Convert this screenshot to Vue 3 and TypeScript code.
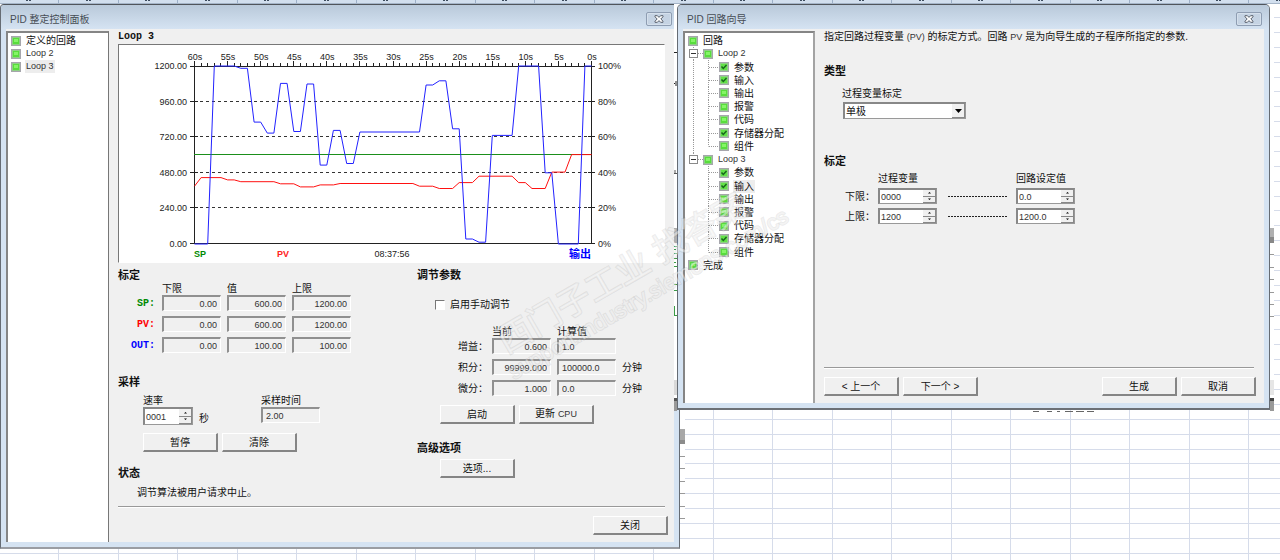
<script setup lang="ts">
import { reactive, ref } from 'vue'

type Point = [number, number]
interface TreeRow { text: string; level: 0 | 1 | 2; done?: boolean; last?: boolean; trunk?: boolean; selected?: boolean; latin?: boolean }

/* spreadsheet behind the windows */
const columnX = (i: number) => Math.round(58 + i * 59.5)
const rowLines = Array.from({ length: 80 }, (_, i) => Math.round(17 + i * 14.88))

/* tuning panel */
const loops = [
  { text: '定义的回路', latin: false, selected: false },
  { text: 'Loop 2', latin: true, selected: false },
  { text: 'Loop 3', latin: true, selected: true },
]
const scaling = [
  { name: 'SP', tone: 'sp', values: ['0.00', '600.00', '1200.00'] },
  { name: 'PV', tone: 'pv', values: ['0.00', '600.00', '1200.00'] },
  { name: 'OUT', tone: 'out', values: ['0.00', '100.00', '100.00'] },
]
const tuning = [
  { name: '增益', current: '0.600', computed: '1.0', unit: '' },
  { name: '积分', current: '99999.000', computed: '100000.0', unit: '分钟' },
  { name: '微分', current: '1.000', computed: '0.0', unit: '分钟' },
]
const rate = ref('0001')
const manual = ref(false)

/* chart: x is seconds since the left edge, y is percent of range */
const plot = { left: 194, right: 591, top: 66, bottom: 244 }
const px = (k: number) => plot.left + ((plot.right - plot.left) * k) / 60
const py = (p: number) => plot.bottom - ((plot.bottom - plot.top) * p) / 100
const toLine = (pts: Point[]) => pts.map(([k, p]) => `${(px(k) + 0.5).toFixed(1)},${py(p).toFixed(1)}`).join(' ')
const output: Point[] = [
  [0, 0], [2, 0], [3, 100], [6, 100], [7, 98.7], [8, 98.7], [9, 68.5], [10, 68.5], [11, 62.3], [12, 62.3],
  [13, 90.2], [14, 90.2], [15, 63.2], [16, 63.2], [17, 89.9], [18, 89.9], [19, 44.3], [20, 44.3], [21, 63.8],
  [22, 63.8], [23, 45.2], [24, 45.2], [25, 62.9], [34, 62.9], [35, 89.3], [36, 89.3], [37, 91.7], [38, 91.7],
  [39, 64.7], [40, 64.7], [41, 2.8], [42, 2.8], [43, 1], [44, 1], [45, 61], [48, 61], [49, 100], [52, 100],
  [53, 40], [54, 40], [55, 0], [58, 0], [59, 100], [60, 100],
]
const process: Point[] = [
  [0, 32.5], [1, 37.3], [4, 37.3], [5, 36], [6, 36], [7, 35], [12, 35], [13, 33.8], [15, 33.8], [16, 32.1],
  [18, 32.1], [19, 33.2], [21, 33.2], [22, 34], [33, 34], [34, 32.5], [36, 32.5], [37, 31.2], [39, 31.2],
  [40, 34.5], [42, 34.5], [43, 38.1], [48, 38.1], [49, 34.5], [50, 34.5], [51, 31.2], [53, 31.2], [54, 40.4],
  [56, 40.4], [57, 50.2], [60, 50.2],
]
const levels = [100, 80, 60, 40, 20, 0]
const seconds = Array.from({ length: 61 }, (_, i) => i)
const secondLabels = seconds.filter((s) => s % 5 === 0)

/* wizard */
const leaves = (selected?: string): TreeRow[] =>
  ['参数', '输入', '输出', '报警', '代码', '存储器分配', '组件'].map((text) => ({
    text,
    level: 2,
    done: ['参数', '输入', '存储器分配'].includes(text),
    last: text === '组件',
    selected: text === selected,
  }))
const tree: TreeRow[] = [
  { text: '回路', level: 0 },
  { text: 'Loop 2', level: 1, latin: true },
  ...leaves().map((r) => ({ ...r, trunk: true })),
  { text: 'Loop 3', level: 1, latin: true },
  ...leaves('输入'),
  { text: '完成', level: 0 },
]
const limits = reactive([
  { name: '下限', pv: '0000', sp: '0.0' },
  { name: '上限', pv: '1200', sp: '1200.0' },
])
const polarity = ref('单极')

function step(value: string, by: number): string {
  const decimals = (value.split('.')[1] ?? '').length
  const next = Math.max(0, Number(value) + by)
  return decimals ? next.toFixed(decimals) : String(next).padStart(4, '0')
}
</script>

<template>
  <div class="desktop">
    <svg class="sheet" width="100%" height="100%" aria-hidden="true">
      <line v-for="y in rowLines" :key="'r' + y" x1="0" x2="100%" :y1="y + 0.5" :y2="y + 0.5" />
      <line v-for="i in 40" :key="'c' + i" :x1="columnX(i - 1) + 0.5" :x2="columnX(i - 1) + 0.5" y1="0" y2="100%" />
      <g class="beneath">
        <rect x="680" y="411" width="5" height="110" fill="#fff" />
        <rect x="680" y="429" width="5" height="15" fill="#a8a8a8" />
        <rect x="680" y="440" width="5" height="4" fill="#8c8c8c" />
        <path d="M680 456.500h5M680 468.500h5M680 481.500h5M680 493.500h5M680 506.500h5M680 518.500h5" stroke="#999" />
        <path d="M1033 411.500h6M1047 411.500h5M1057 411.500h3M1065 411.500h8M1076 411.500h8M1087 411.500h7" stroke="#666" />
      </g>
    </svg>
    <svg class="columns" width="100%" height="4" aria-hidden="true">
      <template v-for="i in 40" :key="i">
        <path :d="`M${columnX(i - 1)}.5 0v3`" stroke="#9db0c8" />
        <path :d="`M${columnX(i - 1) - 32} .5h2m1 0h2`" stroke="#3d4c5e" />
      </template>
    </svg>

    <main class="windows">
      <section class="window" aria-labelledby="t1">
        <header class="titlebar">
          <h1 id="t1"><span class="latin">PID</span> 整定控制面板</h1>
          <button class="close" type="button" aria-label="关闭窗口">
            <svg viewBox="0 0 10 8" width="10" height="8"><path d="M1 .7h2.400L5 2.400 6.600.7H9v1.100L6.800 4 9 6.200v1.100H6.600L5 5.600 3.400 7.300H1V6.200L3.200 4 1 1.800z" /></svg>
          </button>
        </header>
        <div class="client">
          <ul class="listbox loops">
            <li v-for="l in loops" :key="l.text">
              <svg class="led" viewBox="0 0 10 10"><use href="#led" /></svg>
              <span class="name" :class="{ latin: l.latin, selected: l.selected }">{{ l.text }}</span>
            </li>
          </ul>
          <div class="pane">
            <h2 class="mono">Loop 3</h2>
            <div class="chart">
              <svg viewBox="119 45 545 217" role="img" aria-label="Loop 3">
                <g class="grid">
                  <line v-for="p in [80, 60, 40, 20]" :key="p" :x1="plot.left" :x2="plot.right" :y1="Math.round(py(p)) - 0.5" :y2="Math.round(py(p)) - 0.5" />
                </g>
                <g class="axis">
                  <path :d="`M${plot.left + 0.5} 61V244M${plot.right + 0.5} 61V244M190 66.500H595M190 243.500H595`" />
                  <path v-for="s in seconds" :key="s" :d="`M${Math.round(px(s)) + 0.5} ${s % 5 ? 63 : 61}V66`" />
                  <path v-for="p in [80, 60, 40, 20]" :key="'l' + p" :d="`M190 ${Math.round(py(p)) - 0.5}h8M588 ${Math.round(py(p)) - 0.5}h7`" />
                </g>
                <line class="line-sp" :x1="plot.left" :x2="plot.right" y1="154.500" y2="154.500" />
                <polyline class="line-pv" :points="toLine(process)" />
                <polyline class="line-out" :points="toLine(output)" />
                <g class="ticks">
                  <text v-for="s in secondLabels" :key="s" :x="px(s) + 1" y="60" text-anchor="middle">{{ 60 - s }}s</text>
                  <text v-for="p in levels" :key="'v' + p" x="187" :y="py(p) + 3" text-anchor="end">{{ (p * 12).toFixed(2) }}</text>
                  <text v-for="p in levels" :key="'p' + p" x="598" :y="py(p) + 3">{{ p }}%</text>
                  <text x="392" y="257" text-anchor="middle">08:37:56</text>
                </g>
                <g class="legend">
                  <text x="194" y="257" fill="#008a00">SP</text>
                  <text x="277" y="257" fill="#f22">PV</text>
                  <text class="cjk" x="569" y="258" fill="#00f">输出</text>
                </g>
              </svg>
            </div>

            <div class="halves">
              <div class="half">
                <h3>标定</h3>
                <table class="scaling">
                  <thead>
                    <tr><td></td><th scope="col">下限</th><th scope="col">值</th><th scope="col">上限</th></tr>
                  </thead>
                  <tbody>
                    <tr v-for="r in scaling" :key="r.name">
                      <th scope="row" class="mono" :class="r.tone">{{ r.name }}:</th>
                      <td v-for="(v, i) in r.values" :key="i">
                        <input class="field end" readonly :value="v" :aria-label="r.name + ' ' + ['下限', '值', '上限'][i]" />
                      </td>
                    </tr>
                  </tbody>
                </table>

                <h3 class="sampling-title">采样</h3>
                <div class="sampling">
                  <div class="rate">
                    <label for="rate">速率</label>
                    <div class="with-unit">
                      <span class="spin tall">
                        <input id="rate" v-model="rate" />
                        <span class="arrows">
                          <button type="button" aria-label="速率 +" @click="rate = step(rate, 1)"><svg viewBox="0 0 5 3"><path d="M1 2.500h3L2.500 1z" /></svg></button>
                          <button type="button" aria-label="速率 -" @click="rate = step(rate, -1)"><svg viewBox="0 0 5 3"><path d="M1 .5h3L2.500 2z" /></svg></button>
                        </span>
                      </span>
                      <span class="unit">秒</span>
                    </div>
                  </div>
                  <div class="time">
                    <label for="stime">采样时间</label>
                    <input id="stime" class="field" readonly value="2.00" />
                  </div>
                </div>
                <div class="buttons indent">
                  <button class="btn" type="button">暂停</button>
                  <button class="btn" type="button">清除</button>
                </div>
                <h3 class="status-title">状态</h3>
                <p class="status">调节算法被用户请求中止。</p>
              </div>

              <div class="half">
                <h3>调节参数</h3>
                <label class="check"><input v-model="manual" type="checkbox" />启用手动调节</label>
                <table class="tuning">
                  <thead>
                    <tr><td></td><th scope="col">当前</th><th scope="col">计算值</th><td></td></tr>
                  </thead>
                  <tbody>
                    <tr v-for="r in tuning" :key="r.name">
                      <th scope="row">{{ r.name }}：</th>
                      <td><input class="field end" readonly :value="r.current" :aria-label="r.name + ' 当前'" /></td>
                      <td><input class="field" readonly :value="r.computed" :aria-label="r.name + ' 计算值'" /></td>
                      <td>{{ r.unit }}</td>
                    </tr>
                  </tbody>
                </table>
                <div class="buttons tuning-buttons">
                  <button class="btn" type="button">启动</button>
                  <button class="btn" type="button">更新 <span class="latin">CPU</span></button>
                </div>
                <h3 class="advanced-title">高级选项</h3>
                <div class="buttons advanced">
                  <button class="btn" type="button">选项...</button>
                </div>
              </div>
            </div>
            <hr />
            <div class="buttons footer"><button class="btn" type="button">关闭</button></div>
          </div>
        </div>
      </section>

      <div class="wizard">
        <div class="backdrop" aria-hidden="true">
          <svg class="edge-left" width="3" height="407">
            <path d="M0 48.500h3M0 79.500h1M2 77v5" stroke="#222" />
            <path d="M1 166v4M0 169.500h3" stroke="#555" />
            <rect y="224" width="3" height="15" fill="#b0b0b0" />
            <path d="M0 242.500h3M0 245.500h2M0 249.500h3M0 254.500h3M0 258.500h2M0 262.500h3M0 280.500h3M0 286.500h3M.5 302v9M0 311.500h3" stroke="#3a9c46" />
            <rect y="376" width="3" height="15" fill="#d8d8d8" />
            <rect y="394" width="3" height="3" fill="#555" />
            <rect y="397" width="3" height="10" fill="#999" />
          </svg>
          <svg class="edge-right" width="4" height="407">
            <rect y="224" width="4" height="15" fill="#b0b0b0" />
            <rect y="233" width="4" height="6" fill="#888" />
            <path d="M0 250.500h4M0 263.500h4M0 275.500h4M0 288.500h4M0 300.500h4M0 312.500h4" stroke="#999" />
            <rect y="376" width="4" height="15" fill="#e6e6e6" />
            <rect y="394" width="4" height="3" fill="#444" />
            <rect y="397" width="4" height="10" fill="#999" />
          </svg>
        </div>
        <section class="window front" aria-labelledby="t2">
          <header class="titlebar">
            <h1 id="t2"><span class="latin">PID</span> 回路向导</h1>
            <button class="close" type="button" aria-label="关闭窗口">
              <svg viewBox="0 0 10 8" width="10" height="8"><path d="M1 .7h2.400L5 2.400 6.600.7H9v1.100L6.800 4 9 6.200v1.100H6.600L5 5.600 3.400 7.300H1V6.200L3.200 4 1 1.800z" /></svg>
            </button>
          </header>
          <div class="client">
            <ul class="listbox tree">
              <li v-for="(r, i) in tree" :key="i">
                <template v-if="r.level === 1">
                  <span class="node" :class="{ upper: i < 5, lower: i > 5 }">
                    <button class="expander" type="button" :aria-label="'折叠 ' + r.text"></button>
                  </span>
                  <span class="dash short"></span>
                </template>
                <template v-if="r.level === 2">
                  <span class="guide" :class="{ trunk: r.trunk }"></span>
                  <span class="guide trunk" :class="{ half: r.last }"></span>
                  <span class="dash"></span>
                </template>
                <svg class="led" viewBox="0 0 10 10"><use :href="r.done ? '#led-done' : '#led'" /></svg>
                <span class="name" :class="{ latin: r.latin, selected: r.selected }">{{ r.text }}</span>
              </li>
            </ul>
            <form class="pane wizard-pane" @submit.prevent>
              <p class="intro">指定回路过程变量 <span class="latin">(PV)</span> 的标定方式。回路 <span class="latin">PV</span> 是为向导生成的子程序所指定的参数.</p>
              <h3 class="type-title">类型</h3>
              <div class="type">
                <label for="polarity">过程变量标定</label>
                <div class="select">
                  <select id="polarity" v-model="polarity"><option>单极</option><option>双极</option></select>
                  <span class="drop"><svg viewBox="0 0 7 4" width="7" height="4"><path d="M0 0h7L3.500 4z" /></svg></span>
                </div>
              </div>
              <h3 class="limits-title">标定</h3>
              <div class="limits">
                <span></span><span class="head">过程变量</span><span></span><span class="head">回路设定值</span>
                <template v-for="(r, i) in limits" :key="r.name">
                  <label :for="'pv' + i">{{ r.name }}：</label>
                  <span class="spin">
                    <input :id="'pv' + i" v-model="r.pv" />
                    <span class="arrows">
                      <button type="button" :aria-label="r.name + ' 过程变量 +'" @click="r.pv = step(r.pv, 1)"><svg viewBox="0 0 5 3"><path d="M1 2.500h3L2.500 1z" /></svg></button>
                      <button type="button" :aria-label="r.name + ' 过程变量 -'" @click="r.pv = step(r.pv, -1)"><svg viewBox="0 0 5 3"><path d="M1 .5h3L2.500 2z" /></svg></button>
                    </span>
                  </span>
                  <span class="link"></span>
                  <span class="spin">
                    <input v-model="r.sp" :aria-label="r.name + ' 回路设定值'" />
                    <span class="arrows">
                      <button type="button" :aria-label="r.name + ' 回路设定值 +'" @click="r.sp = step(r.sp, 1)"><svg viewBox="0 0 5 3"><path d="M1 2.500h3L2.500 1z" /></svg></button>
                      <button type="button" :aria-label="r.name + ' 回路设定值 -'" @click="r.sp = step(r.sp, -1)"><svg viewBox="0 0 5 3"><path d="M1 .5h3L2.500 2z" /></svg></button>
                    </span>
                  </span>
                </template>
              </div>
              <hr class="wizard-rule" />
              <div class="buttons">
                <button class="btn" type="button">&lt; 上一个</button>
                <button class="btn" type="button">下一个 &gt;</button>
                <button class="btn push" type="button">生成</button>
                <button class="btn" type="button">取消</button>
              </div>
            </form>
          </div>
        </section>
      </div>
    </main>

    <svg class="watermark" width="340" height="220" viewBox="480 180 340 220" aria-hidden="true">
      <defs>
        <g id="led">
          <rect width="10" height="10" fill="#a6a6ac" />
          <rect x="1" y="1" width="8" height="8" fill="#8fcf86" />
          <rect x="2" y="2" width="6" height="6" fill="#58dd3c" />
          <path d="M3 3h4v3H3z" fill="#84f566" />
        </g>
        <g id="led-done">
          <rect width="10" height="10" fill="#a6a6ac" />
          <rect x="1" y="1" width="8" height="8" fill="#8fcf86" />
          <rect x="2" y="2" width="6" height="6" fill="#62e246" />
          <path d="M2.500 4.500 4.300 6.500 7.500 3" fill="none" stroke="#17661c" stroke-width="1.500" />
        </g>
      </defs>
      <g class="mark">
        <text class="mark-cjk" transform="translate(506 354) rotate(-30)">西门子工业 找答案</text>
        <text class="mark-latin" transform="translate(514 380) rotate(-30)">support.industry.siemens.com/cs</text>
      </g>
    </svg>
  </div>
</template>

<style>
body {
  margin: 0;
  background: #fff;
}
</style>

<style scoped>
.desktop {
  position: relative;
  min-height: 100vh;
  overflow: hidden;
  font: 10px/13px "Liberation Sans", "Noto Sans CJK SC", sans-serif;
  color: #111;
}
.desktop * { box-sizing: border-box; }
button, input, select { font: inherit; color: inherit; margin: 0; padding: 0; border-radius: 0; }
h1, h2, h3, p, ul { margin: 0; padding: 0; }
ul { list-style: none; }
.latin { font-size: 9px; color: #333; }
.mono { font-family: "Liberation Mono", monospace; }

.sheet { position: absolute; inset: 0; }
.sheet line { stroke: #d6dcea; }
.columns {
  position: relative;
  display: block;
  background: #d2dfee;
  border-bottom: 1px solid #a5b5c8;
}

.windows {
  position: relative;
  display: grid;
  grid-template-columns: 680fr 590fr;
  align-items: start;
  padding-right: 10px;
}
.window {
  background: #d5e3f2;
  border: 1px solid #666c74;
  border-bottom: 2px solid #9a9da3;
  border-top-color: #50555c;
  border-radius: 4px 4px 0 0;
}
.wizard { position: relative; margin-left: -3px; }
.front { position: relative; border-bottom: 2px solid #6c7076; border-radius: 5px 5px 0 0; }
.backdrop {
  position: absolute;
  inset: 0 -4px 0 -3px;
  display: flex;
  justify-content: space-between;
  background: #fff;
}
.titlebar {
  display: flex;
  align-items: center;
  justify-content: space-between;
  height: 24px;
  padding: 4px 7px 0 9px;
  border-radius: 4px 4px 0 0;
  background: linear-gradient(#b9c9da, #d5e3f2);
}
.titlebar h1 { font-size: 10px; font-weight: 400; color: #474d55; }
.titlebar .latin { font-size: 10px; color: #474d55; }
.close {
  display: flex;
  align-items: center;
  justify-content: center;
  width: 26px;
  height: 14px;
  border: 1px solid #8e9db2;
  border-radius: 2px;
  background: #c5d3e3;
  box-shadow: inset 0 0 0 1px #d5e0ec;
}
.close path { fill: #fff; stroke: #59616d; }
.client { display: flex; margin: 0 5px 5px; background: #f0f0f0; }
.listbox {
  flex: none;
  margin-top: 2px;
  padding: 1px 0 0 2px;
  background: #fff;
  border: 2px solid #858585;
  border-right: 1px solid #777;
  border-bottom: 0;
  display: grid;
}
.loops { width: 103px; align-content: start; grid-template-rows: repeat(3, 13px); }
.listbox li { display: flex; align-items: center; min-height: 0; white-space: nowrap; line-height: 13px; }
.led { flex: none; width: 10px; height: 10px; margin-left: 1px; }
.name { margin-left: 4px; padding: 0 1px; height: 13px; }
.selected { background: #ededed; }
.tree { width: 132px; border-right: 2px solid #a3a3a3; grid-template-rows: repeat(18, 1fr); padding-bottom: 131px; }
.guide { align-self: stretch; flex: none; width: 15px; }
.trunk, .node { background: repeating-linear-gradient(#999 0 1px, #fff 1px 2px) 6px 0 / 1px 100% no-repeat; }
.trunk.half, .node.lower { background-size: 1px 50%; }
.dash { flex: none; width: 10px; height: 1px; margin-left: -8px; margin-right: -1px; background: repeating-linear-gradient(90deg, #999 0 1px, #fff 1px 2px); }
.dash.short { width: 5px; margin: 0 -1px 0 0; }
.node { align-self: stretch; display: flex; align-items: center; flex: none; width: 11px; padding-left: 2px; }
.expander {
  width: 9px;
  height: 9px;
  border: 1px solid #8a8a8a;
  background: linear-gradient(#333, #333) center / 5px 1px no-repeat #fff;
}

.pane { flex: 1; min-width: 0; padding: 1px 6px 7px 9px; display: flex; flex-direction: column; }
h2 { font-size: 10px; line-height: 14px; }
h3 { font-size: 11px; line-height: 14px; font-weight: 700; }
.chart {
  margin-right: 3px;
  border: 1px solid #fff;
  border-top-color: #777;
  border-left-color: #777;
  background: #fff;
}
.chart svg { display: block; width: 100%; height: 217px; }
.grid line { stroke: #333; stroke-dasharray: 3 3; }
.axis path { stroke: #222; fill: none; }
.line-sp { stroke: #1b8f1b; }
.line-pv, .line-out { fill: none; stroke-width: 1; }
.line-pv { stroke: #f11; }
.line-out { stroke: #22f; }
.ticks text { font-size: 9px; fill: #222; }
.legend text { font-size: 9px; font-weight: 700; }
.legend .cjk { font-size: 11px; }

.halves { display: grid; grid-template-columns: 299px 1fr; padding-top: 5px; }
table { border-collapse: collapse; }
th, td { padding: 0 6px 5px 0; font-weight: 400; text-align: left; white-space: nowrap; line-height: 13px; }
thead th, thead td { padding: 0; height: 13px; }
tbody td, tbody th { height: 21px; }
.scaling tbody th { width: 44px; padding: 0 7px 5px 0; text-align: right; font-weight: 700; }
.sp { color: #008a00; }
.pv { color: #f00; }
.out { color: #00f; }
.field {
  display: block;
  width: 59px;
  height: 16px;
  padding: 0 3px;
  background: #f0f0f0;
  border: 1px solid #fff;
  border-top: 2px solid #909090;
  border-left: 2px solid #909090;
  font-size: 9px;
  line-height: 13px;
  color: #333;
}
.end { text-align: right; }
.sampling-title { margin-top: 17px; }
.sampling { display: flex; margin: 5px 0 0 25px; }
.sampling label { display: block; }
.rate { width: 118px; }
.with-unit { display: flex; }
.unit { margin: 5px 0 0 6px; }
.buttons { display: flex; gap: 4px; }
.indent { margin: 8px 0 0 25px; }
.btn {
  width: 75px;
  height: 19px;
  background: #f0f0f0;
  border: 1px solid #fff;
  border-right: 2px solid #858585;
  border-bottom: 2px solid #858585;
  line-height: 15px;
}
.status-title { margin-top: 14px; }
.status { margin: 6px 0 0 19px; line-height: 14px; }
.check { display: flex; align-items: center; margin: 16px 0 0 18px; gap: 5px; }
.check input {
  appearance: none;
  width: 10px;
  height: 10px;
  background: #fff;
  border: 1px solid #fff;
  border-top-color: #777;
  border-left-color: #777;
}
.check input:checked { background: #333; }
.tuning { margin: 14px 0 0 41px; }
.tuning tbody th { width: 34px; padding-right: 0; }
.tuning-buttons { margin: 4px 0 0 23px; }
.advanced-title { margin-top: 17px; }
.advanced { margin: 4px 0 0 23px; }
hr { margin: 6px 3px 0 0; border: 0; border-top: 1px solid #999; border-bottom: 1px solid #fff; }
.footer { justify-content: flex-end; margin-top: 8px; }

.spin {
  display: flex;
  width: 59px;
  height: 16px;
  background: #fff;
  border: 1px solid #999;
  border-top: 2px solid #888;
  border-left: 2px solid #888;
}
.spin.tall { width: 50px; height: 18px; }
.spin input { flex: 1; width: 0; min-width: 0; padding-left: 1px; border: 0; background: none; font-size: 9px; line-height: 12px; color: #333; }
.arrows { display: flex; flex-direction: column; width: 13px; }
.arrows button {
  flex: 1;
  min-height: 0;
  display: flex;
  align-items: center;
  justify-content: center;
  background: #f0f0f0;
  border: 0;
  border-right: 1px solid #888;
  border-bottom: 1px solid #888;
}
.arrows svg { width: 5px; height: 3px; }

.wizard-pane { min-height: 374px; padding-right: 8px; }
.intro { line-height: 14px; }
.type-title { margin-top: 20px; }
.type { margin: 9px 0 0 18px; }
.type label { display: block; }
.select { display: grid; width: 123px; height: 17px; margin: 2px 0 0 1px; background: #fff; border: 1px solid #999; border-top: 2px solid #888; border-left: 2px solid #888; }
.select select { grid-area: 1 / 1; appearance: none; width: 100%; border: 0; background: none; padding: 0 0 0 1px; line-height: 13px; }
.drop {
  grid-area: 1 / 1;
  justify-self: end;
  display: flex;
  align-items: center;
  justify-content: center;
  width: 13px;
  background: #f0f0f0;
  border-right: 1px solid #888;
  border-bottom: 1px solid #888;
  pointer-events: none;
}
.limits-title { margin-top: 35px; }
.limits {
  display: grid;
  grid-template-columns: 33px 70px 68px 59px;
  grid-template-rows: 11px 16px 16px;
  row-gap: 4px;
  margin: 5px 0 0 21px;
  align-items: center;
}
.head { white-space: nowrap; }
.link { width: 60px; height: 1px; background: repeating-linear-gradient(90deg, #222 0 2px, #f0f0f0 2px 3px); }
.pane > .wizard-rule { margin: auto 2px 0 0; }
.wizard-rule + .buttons { margin-top: 8px; }
.push { margin-left: auto; }

.watermark { position: absolute; left: 480px; top: 180px; pointer-events: none; }
.mark text { fill: #fff; fill-opacity: 0.45; stroke: #888; stroke-opacity: 0.16; stroke-width: 2; paint-order: stroke; }
.mark-cjk { font-size: 34px; }
.mark-latin { font-size: 22px; }
</style>
